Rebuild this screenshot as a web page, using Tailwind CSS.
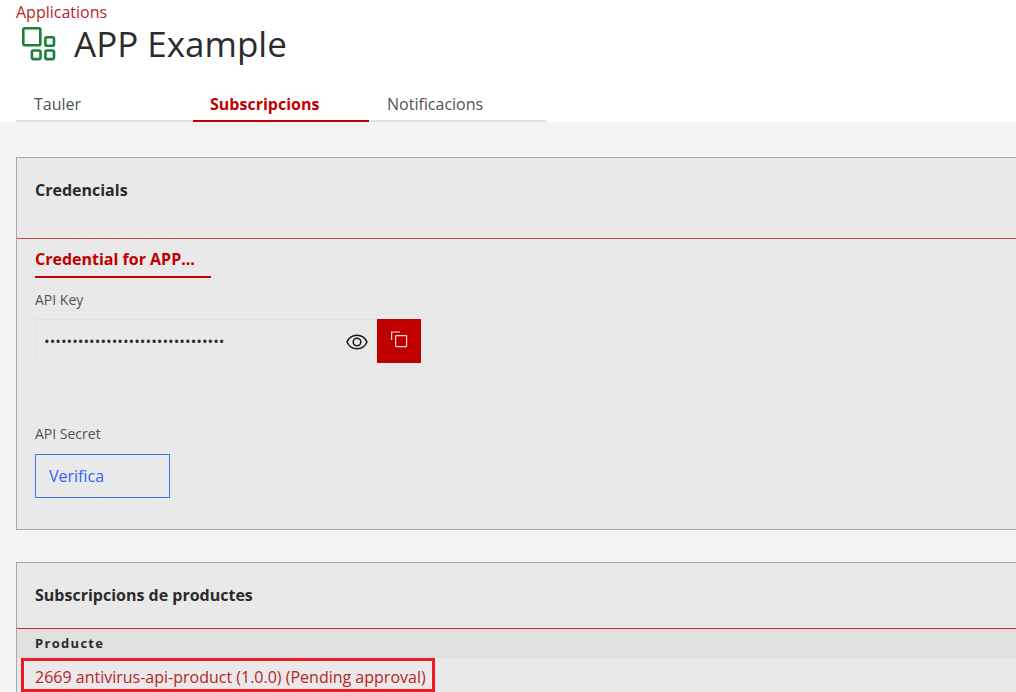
<!DOCTYPE html>
<html lang="ca">
<head>
<meta charset="utf-8">
<meta name="viewport" content="width=device-width, initial-scale=1">
<title>APP Example</title>
<script src="https://cdn.jsdelivr.net/npm/@tailwindcss/browser@4"></script>
</head>
<body class="h-screen overflow-hidden bg-[#f4f4f4] font-['Open_Sans',sans-serif] text-base text-[#2b2b2b]">
<header class="bg-white pl-4">
  <nav aria-label="Ruta"><a href="#" class="block w-fit leading-6 text-[#b8232b]">Applications</a></nav>
  <div class="flex h-10 items-center gap-4">
    <svg class="ml-1 size-9" viewBox="0 0 36 36" fill="none" stroke="#198038" stroke-width="2.6" aria-hidden="true">
      <rect x="3.300" y="2.200" width="17" height="17" rx="1.500"/>
      <rect x="25.400" y="11.200" width="8.600" height="8.600" rx="1.500"/>
      <rect x="11.900" y="24.500" width="8.600" height="8.600" rx="1.500"/>
      <rect x="25.400" y="24.500" width="8.600" height="8.600" rx="1.500"/>
    </svg>
    <h1 class="ml-0.5 text-[35px]">APP Example</h1>
  </div>
  <div role="tablist" class="mt-5 flex h-[38px]">
    <button role="tab" class="w-[177px] border-b-2 border-[#e0e0e0] pt-1 pl-[18px] text-left text-[#525252]">Tauler</button>
    <button role="tab" aria-selected="true" class="w-[176px] border-b-2 border-[#c00000] pt-1 pl-[17px] text-left font-bold text-[#c00000]">Subscripcions</button>
    <button role="tab" class="w-[177px] border-b-2 border-[#e0e0e0] pt-1 pl-[18px] text-left text-[#525252]">Notificacions</button>
  </div>
</header>
<main class="flex flex-col gap-8 pt-[35px] pl-4">
  <section class="border border-r-0 border-[#a8a8a8] bg-[#e9e9e9]">
    <div class="flex h-[81px] border-b border-[#cf4b50] pt-5 pl-[18px]">
      <h2 class="leading-6 font-bold">Credencials</h2>
    </div>
    <div class="pt-[7px] pb-[31px] pl-[18px]">
      <button class="block h-8 w-44 border-b-2 border-[#c00000] pb-1 text-left font-bold text-[#c00000]">Credential for APP...</button>
      <label for="key" class="mt-3 block text-sm leading-5 text-[#525252]">API Key</label>
      <div class="mt-[9px] flex h-11">
        <div class="flex max-w-[342px] flex-1 items-center border-t border-l border-[#e0e0e0]">
          <input id="key" type="password" readonly value="0123456789abcdef0123456789abcdef" class="min-w-0 flex-1 bg-transparent pl-2 text-[15px] outline-none">
          <button aria-label="Mostra" class="mr-2">
            <svg class="size-6" viewBox="0 0 24 24" fill="none" stroke="#161616" stroke-width="1.500" aria-hidden="true">
              <path d="M2 12C4 7.600 7.700 5.200 12 5.200S20 7.600 22 12C20 16.400 16.300 18.800 12 18.800S4 16.400 2 12Z"/>
              <circle cx="12" cy="12" r="3.800"/>
            </svg>
          </button>
        </div>
        <button aria-label="Copia" class="flex size-11 justify-center bg-[#c00000] pt-3">
          <svg class="size-[18px]" viewBox="0 0 18 18" fill="none" stroke="#f4dada" stroke-width="1.200" aria-hidden="true">
            <path d="M1.600 9V1H10"/>
            <rect x="5.600" y="4.600" width="11" height="11" rx=".5"/>
          </svg>
        </button>
      </div>
      <p class="mt-[61px] text-sm leading-5 text-[#525252]">API Secret</p>
      <button class="mt-[10px] block h-11 w-[135px] border border-[#3b78f0] pl-[13px] text-left text-[#2f63fa]">Verifica</button>
    </div>
  </section>
  <section class="border border-r-0 border-[#a8a8a8] bg-[#e9e9e9]">
    <h2 class="h-[66px] border-b border-[#d02a30] pt-5 pl-[18px] leading-6 font-bold">Subscripcions de productes</h2>
    <table class="w-full text-left">
      <thead class="bg-[#e0e0e0]"><tr><th class="h-[29px] pl-[18px] text-[13px] font-bold tracking-widest">Producte</th></tr></thead>
      <tbody><tr><td class="pl-1"><a href="#" class="flex h-[34px] w-fit items-center border-3 border-[#ed1c24] pt-1 pr-1.5 pl-[11px] text-[#b8232b]">2669 antivirus-api-product (1.0.0) (Pending approval)</a></td></tr></tbody>
    </table>
  </section>
</main>
</body>
</html>
